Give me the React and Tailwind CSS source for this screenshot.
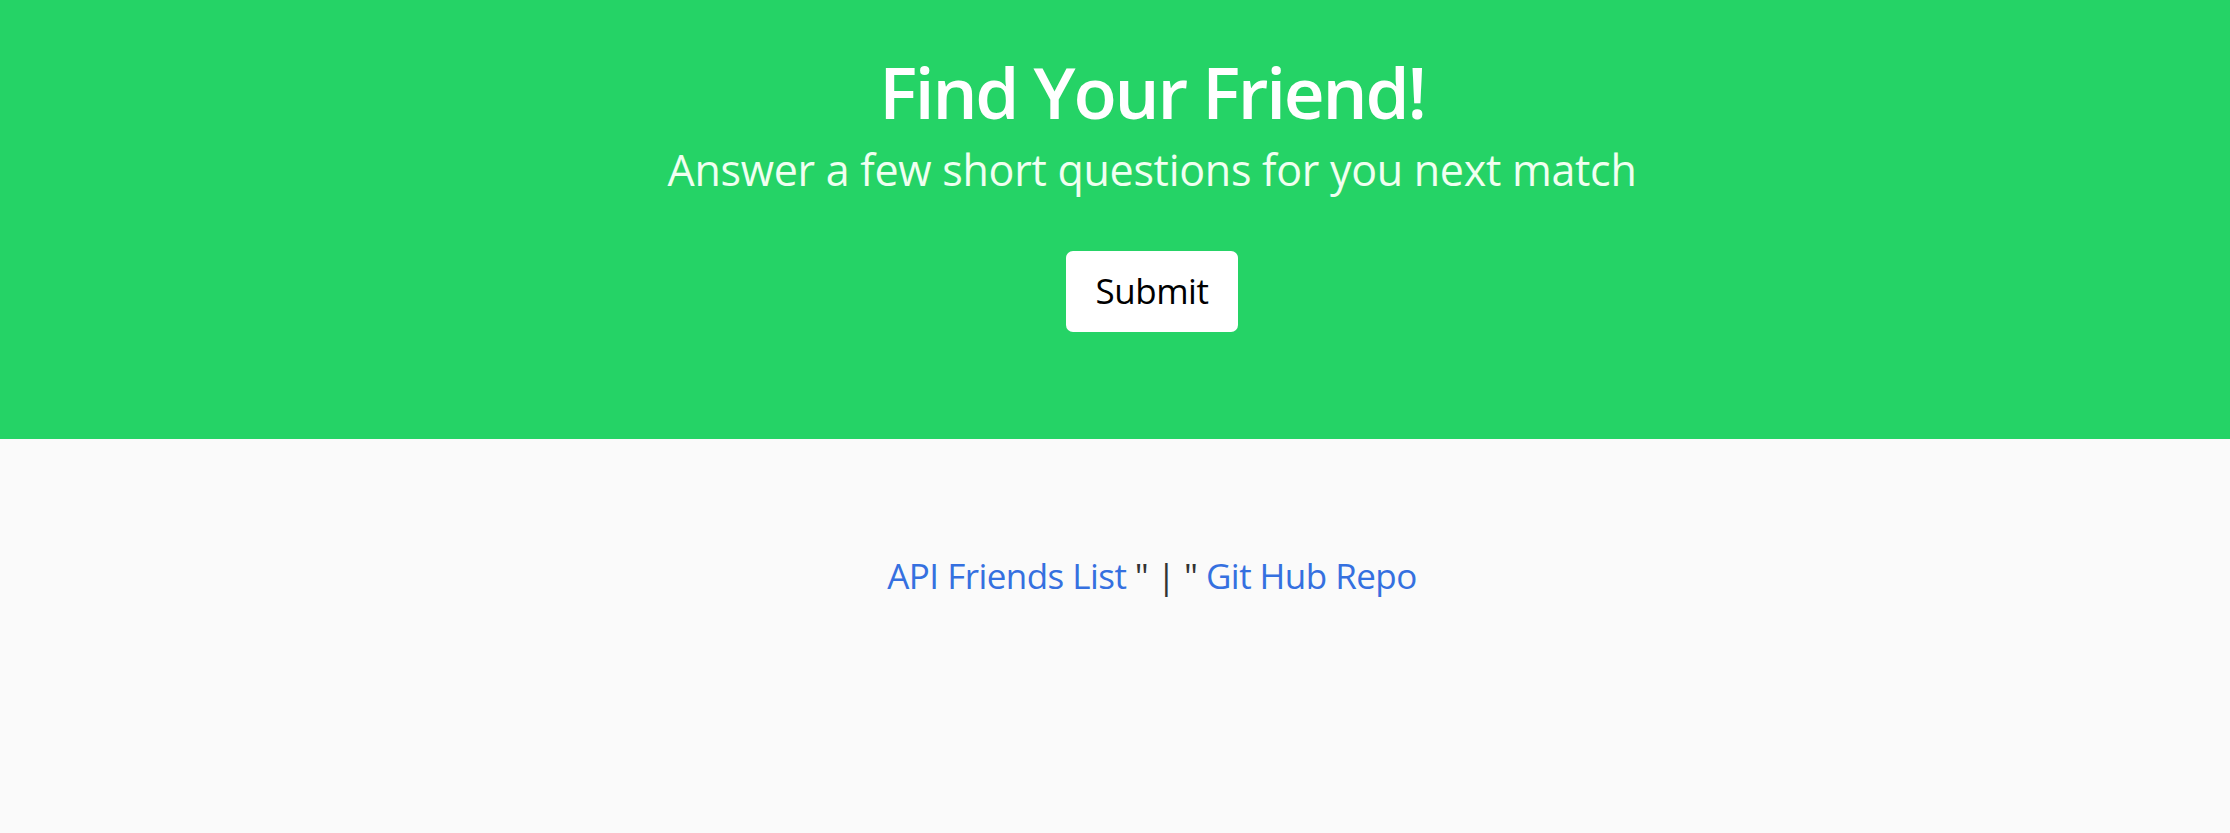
export default function App() {
  return (
    <div className="min-h-[833px] bg-[#fafafa] font-['Open_Sans',sans-serif]">
      <header className="h-[439px] bg-[#25d366] flex flex-col items-center pt-[50px] pl-[74px]">
        <h1 className="text-[71px] leading-[84px] font-semibold text-white tracking-[-2.2px]">Find Your Friend!</h1>
        <p className="mt-[8px] text-[43px] leading-[56px] text-[#f0fff0] tracking-[-0.28px]">Answer a few short questions for you next match</p>
        <button className="mt-[53px] w-[172px] h-[81px] bg-white rounded-[7px] text-[35px] text-black tracking-[-0.5px]">Submit</button>
      </header>
      <footer className="flex justify-center pt-[112px] pl-[74px] text-[35px] leading-[50px] tracking-[-0.55px]">
        <a href="#" className="text-[#3570e0]">API Friends List</a>
        <span className="text-[#333] whitespace-pre"> " | " </span>
        <a href="#" className="text-[#3570e0]">Git Hub Repo</a>
      </footer>
    </div>
  );
}
